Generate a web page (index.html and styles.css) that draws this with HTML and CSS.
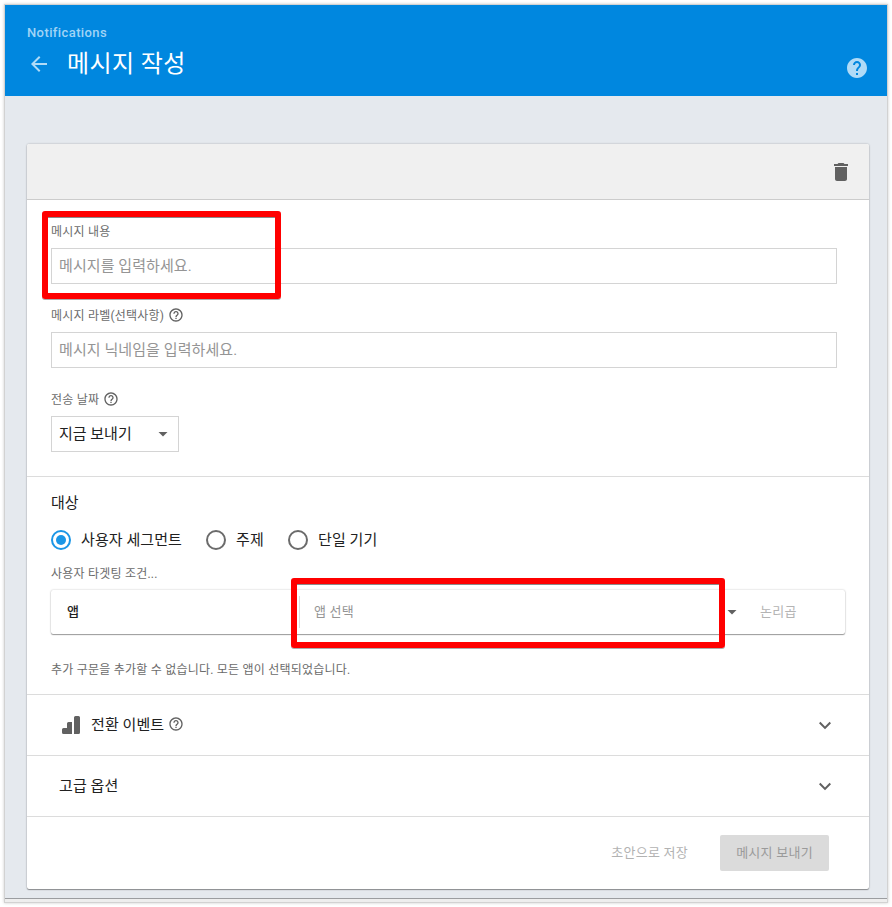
FILE: index.html
```html
<!DOCTYPE html>
<html lang="ko">
<head>
<meta charset="utf-8">
<title>메시지 작성</title>
<link rel="stylesheet" href="styles.css">
</head>
<body>
<svg width="0" height="0" class="defs">
  <symbol id="help" viewBox="0 0 24 24"><path d="M11 18h2v-2h-2v2zm1-16C6.48 2 2 6.48 2 12s4.48 10 10 10 10-4.480 10-10S17.520 2 12 2zm0 18c-4.410 0-8-3.590-8-8s3.590-8 8-8 8 3.590 8 8-3.590 8-8 8zm0-14c-2.210 0-4 1.790-4 4h2c0-1.100.9-2 2-2s2 .9 2 2c0 2-3 1.750-3 5h2c0-2.250 3-2.500 3-5 0-2.210-1.790-4-4-4z"/></symbol>
  <symbol id="chevron" viewBox="0 0 24 24"><path d="M7.410 7.840L12 12.420l4.590-4.580L18 9.250l-6 6-6-6z"/></symbol>
</svg>
<div class="window">
  <header class="topbar">
    <div class="crumb">Notifications</div>
    <div class="titlerow">
      <svg class="back" viewBox="0 0 24 24"><path d="M20 11H7.830l5.590-5.590L12 4l-8 8 8 8 1.410-1.410L7.830 13H20v-2z"/></svg>
      <h1>메시지 작성</h1>
      <svg class="tophelp" viewBox="0 0 24 24"><path d="M12 2C6.480 2 2 6.480 2 12s4.480 10 10 10 10-4.480 10-10S17.520 2 12 2zm1 17h-2v-2h2v2zm2.070-7.750l-.9.920C13.450 12.900 13 13.500 13 15h-2v-.5c0-1.100.450-2.100 1.170-2.830l1.240-1.260c.370-.360.590-.860.590-1.410 0-1.100-.9-2-2-2s-2 .9-2 2H8c0-2.210 1.790-4 4-4s4 1.790 4 4c0 .880-.360 1.680-.930 2.250z"/></svg>
    </div>
  </header>
  <main>
    <div class="card">
      <div class="cardhead">
        <svg class="trash" viewBox="0 0 24 24"><path d="M6 19c0 1.100.9 2 2 2h8c1.100 0 2-.9 2-2V7H6v12zM19 4h-3.500l-1-1h-5l-1 1H5v2h14V4z"/></svg>
      </div>
      <section class="message">
        <div class="label"><span>메시지 내용</span></div>
        <div class="input">메시지를 입력하세요.</div>
        <div class="label"><span>메시지 라벨(선택사항)</span><svg class="help"><use href="#help"/></svg></div>
        <div class="input">메시지 닉네임을 입력하세요.</div>
        <div class="label"><span>전송 날짜</span><svg class="help"><use href="#help"/></svg></div>
        <div class="select"><span>지금 보내기</span><i class="caret"></i></div>
        <div class="mark mark-message"></div>
      </section>
      <section class="target">
        <h2>대상</h2>
        <div class="radios">
          <span class="radio on"></span><span class="r1">사용자 세그먼트</span>
          <span class="radio"></span><span class="r2">주제</span>
          <span class="radio"></span><span>단일 기기</span>
        </div>
        <div class="label cond"><span>사용자 타겟팅 조건...</span></div>
        <div class="rule">
          <div class="rule-name">앱</div>
          <div class="rule-value">앱 선택</div>
          <i class="caret"></i>
          <div class="rule-and">논리곱</div>
          <div class="mark mark-app"></div>
        </div>
        <div class="label note"><span>추가 구문을 추가할 수 없습니다. 모든 앱이 선택되었습니다.</span></div>
      </section>
      <div class="fold">
        <svg class="bars" viewBox="0 0 18 18"><path d="M0 13.500Q0 12 1.500 12H5V7.500Q5 6 6.500 6H10V18H1.500Q0 18 0 16.500zM12 1.500Q12 0 13.500 0h3Q18 0 18 1.500v15Q18 18 16.500 18H12z"/></svg>
        <span>전환 이벤트</span><svg class="help"><use href="#help"/></svg>
        <svg class="chev"><use href="#chevron"/></svg>
      </div>
      <div class="fold">
        <span>고급 옵션</span>
        <svg class="chev"><use href="#chevron"/></svg>
      </div>
      <footer>
        <span class="draft">초안으로 저장</span>
        <span class="send">메시지 보내기</span>
      </footer>
    </div>
  </main>
</div>
</body>
</html>
```

FILE: styles.css
```css
* { box-sizing: border-box; }
body {
  margin: 0;
  padding: 5px;
  height: 907px;
  background: #fff;
  font-family: Roboto, "Noto Sans CJK KR", sans-serif;
  color: #212121;
  overflow: hidden;
}
.defs { position: absolute; }
h1, h2 { margin: 0; font-weight: 400; }
svg { flex: none; }
.window {
  width: 882px;
  height: 897px;
  background: #eee;
  box-shadow: 0 0 0 1px #d2d2d2, 0 0 3px 1px #ccc;
}
.topbar {
  height: 91px;
  padding: 18px 18px 0 22px;
  background: #0087df;
  color: #fff;
}
.crumb {
  height: 20px;
  line-height: 19px;
  font-size: 13px;
  font-weight: 500;
  letter-spacing: .4px;
  color: #a0d4f6;
}
.titlerow { display: flex; align-items: center; height: 40px; }
.back { width: 24px; height: 24px; fill: #b0dbf7; margin-top: 1px; }
h1 { margin-left: 16px; padding-top: 2px; font-size: 24px; line-height: 40px; letter-spacing: .4px; }
.tophelp { width: 24px; height: 24px; margin-left: auto; margin-top: 10px; fill: #b0dbf7; }
main {
  height: 803px;
  padding: 48px 18px 0 22px;
  background: #e5e9ee;
  border-bottom: 1px solid #9b9da0;
}
.card {
  width: 842px;
  height: 745px;
  background: #fff;
  border-radius: 2px;
  box-shadow: 0 1px 1px rgba(0,0,0,.35), 0 0 2px rgba(0,0,0,.3);
}
.cardhead {
  display: flex;
  align-items: center;
  justify-content: flex-end;
  height: 56px;
  padding-right: 16px;
  background: #f0f0f0;
  border-bottom: 1px solid #ccc;
  border-radius: 2px 2px 0 0;
}
.trash { width: 24px; height: 24px; fill: #616161; }
section { position: relative; border-bottom: 1px solid #dcdcdc; }
.message { height: 277px; padding: 20px 32px 0 24px; }
.label {
  display: flex;
  align-items: center;
  height: 22px;
  font-size: 12px;
  letter-spacing: .22px;
  color: #6b6b6b;
}
.label span { padding-bottom: 2px; }
.help { width: 16px; height: 16px; margin-left: 4px; fill: #616161; }
.input {
  height: 36px;
  margin: 6px 0 20px;
  padding-left: 7px;
  border: 1px solid #d4d4d4;
  font-size: 15px;
  line-height: 35px;
  letter-spacing: .08px;
  color: #959595;
}
.select {
  display: flex;
  align-items: center;
  justify-content: space-between;
  width: 128px;
  height: 36px;
  margin-top: 6px;
  padding: 0 10px 0 7px;
  border: 1px solid #d4d4d4;
  font-size: 15px;
}
.select span { padding-bottom: 4px; }
.caret {
  width: 10px;
  height: 5px;
  background: #616161;
  clip-path: polygon(0 0, 100% 0, 50% 100%);
}
.mark {
  position: absolute;
  border: 6px solid #f00;
  border-radius: 3px;
  box-shadow: 0 1px 0 rgba(90,90,90,.5), inset 0 1px 0 rgba(90,90,90,.7);
}
.mark-message { left: 15px; top: 11px; width: 239px; height: 88px; }
.mark-app { left: 240px; top: -12px; width: 434px; height: 70px; }
.target { height: 218px; padding: 15px 24px 0; }
h2 { height: 22px; font-size: 15px; line-height: 22px; }
.radios { display: flex; align-items: center; height: 24px; margin-top: 14px; font-size: 15px; line-height: 24px; letter-spacing: .08px; }
.radio {
  display: grid;
  place-items: center;
  width: 20px;
  height: 20px;
  margin-right: 10px;
  border: 2px solid #6b6b6b;
  border-radius: 50%;
}
.on { border-color: #1a96e6; }
.on::after { content: ""; width: 10px; height: 10px; border-radius: 50%; background: #1a96e6; }
.r1 { width: 125px; }
.r2 { width: 52px; }
.cond { margin-top: 10px; }
.rule {
  position: relative;
  display: flex;
  align-items: center;
  width: 794px;
  height: 44px;
  margin-top: 6px;
  border-radius: 2px;
  font-size: 13px;
  box-shadow: 0 1px 1px rgba(0,0,0,.35), 0 0 2px rgba(0,0,0,.25);
}
.rule-name { width: 248px; padding: 0 0 3px 16px; font-weight: 500; }
.rule-value {
  width: 428px;
  height: 32px;
  padding-left: 14px;
  border-left: 1px solid #dcdcdc;
  line-height: 32px;
  letter-spacing: .2px;
  color: #959595;
}
.rule-and { margin-left: 23px; padding-bottom: 3px; letter-spacing: .3px; color: #b4b4b4; }
.note { margin-top: 24px; }
.fold {
  display: flex;
  align-items: center;
  height: 61px;
  padding: 0 32px;
  border-bottom: 1px solid #dcdcdc;
  font-size: 15px;
  letter-spacing: .08px;
}
.fold span { padding-bottom: 4px; }
.fold .help { margin-top: -2px; }
.bars { width: 18px; height: 18px; margin: 0 11px 0 3px; fill: #616161; }
.chev { width: 24px; height: 24px; margin: 2px 0 0 auto; fill: #616161; }
footer {
  display: flex;
  align-items: center;
  justify-content: flex-end;
  height: 72px;
  padding-right: 40px;
  font-size: 13px;
  letter-spacing: .25px;
}
.draft { margin-right: 32px; padding-bottom: 3px; color: #b2b2b2; }
.send {
  width: 109px;
  height: 36px;
  border-radius: 2px;
  background: #dbdbdb;
  color: #9a9a9a;
  text-align: center;
  line-height: 35px;
}
```
